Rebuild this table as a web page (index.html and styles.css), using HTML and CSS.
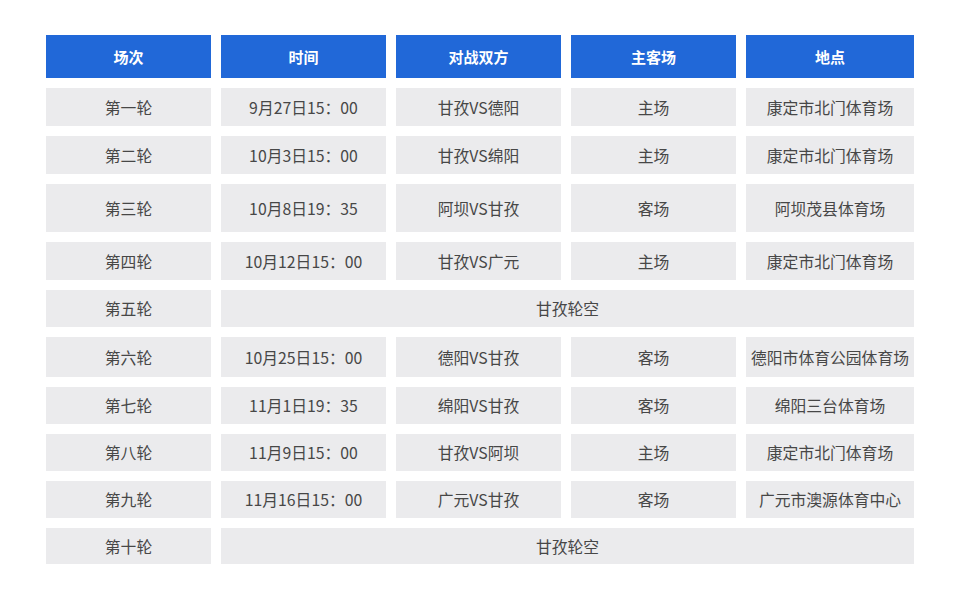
FILE: index.html
```html
<!DOCTYPE html>
<html lang="zh-CN">
<head>
<meta charset="utf-8">
<title>赛程</title>
<link rel="stylesheet" href="styles.css">
</head>
<body>
<div class="schedule">
  <div class="cell head">场次</div>
  <div class="cell head">时间</div>
  <div class="cell head">对战双方</div>
  <div class="cell head">主客场</div>
  <div class="cell head">地点</div>

  <div class="cell">第一轮</div>
  <div class="cell">9月27日15：00</div>
  <div class="cell">甘孜VS德阳</div>
  <div class="cell">主场</div>
  <div class="cell">康定市北门体育场</div>

  <div class="cell">第二轮</div>
  <div class="cell">10月3日15：00</div>
  <div class="cell">甘孜VS绵阳</div>
  <div class="cell">主场</div>
  <div class="cell">康定市北门体育场</div>

  <div class="cell">第三轮</div>
  <div class="cell">10月8日19：35</div>
  <div class="cell">阿坝VS甘孜</div>
  <div class="cell">客场</div>
  <div class="cell">阿坝茂县体育场</div>

  <div class="cell">第四轮</div>
  <div class="cell">10月12日15：00</div>
  <div class="cell">甘孜VS广元</div>
  <div class="cell">主场</div>
  <div class="cell">康定市北门体育场</div>

  <div class="cell">第五轮</div>
  <div class="cell span">甘孜轮空</div>

  <div class="cell">第六轮</div>
  <div class="cell">10月25日15：00</div>
  <div class="cell">德阳VS甘孜</div>
  <div class="cell">客场</div>
  <div class="cell">德阳市体育公园体育场</div>

  <div class="cell">第七轮</div>
  <div class="cell">11月1日19：35</div>
  <div class="cell">绵阳VS甘孜</div>
  <div class="cell">客场</div>
  <div class="cell">绵阳三台体育场</div>

  <div class="cell">第八轮</div>
  <div class="cell">11月9日15：00</div>
  <div class="cell">甘孜VS阿坝</div>
  <div class="cell">主场</div>
  <div class="cell">康定市北门体育场</div>

  <div class="cell">第九轮</div>
  <div class="cell">11月16日15：00</div>
  <div class="cell">广元VS甘孜</div>
  <div class="cell">客场</div>
  <div class="cell">广元市澳源体育中心</div>

  <div class="cell">第十轮</div>
  <div class="cell span">甘孜轮空</div>
</div>
</body>
</html>
```
FILE: styles.css
```css
html, body {
  margin: 0;
  padding: 0;
  background: #ffffff;
}
body {
  padding: 35px 0 0 46px;
  font-family: "Noto Sans CJK SC", "Noto Sans", sans-serif;
}
.schedule {
  display: grid;
  grid-template-columns: 165px 165px 165px 165px 168px;
  grid-template-rows: 43px 38px 38px 48px 38px 37px 40px 37px 37px 37px 36px;
  column-gap: 10px;
  row-gap: 10px;
  width: 868px;
}
.cell {
  display: flex;
  align-items: center;
  justify-content: center;
  background: #ebebed;
  color: #474747;
  font-size: 15.8px;
  white-space: nowrap;
}
.head {
  background: #2168d8;
  color: #ffffff;
  font-size: 15px;
  font-weight: 700;
}
.span {
  grid-column: 2 / 6;
}
```
